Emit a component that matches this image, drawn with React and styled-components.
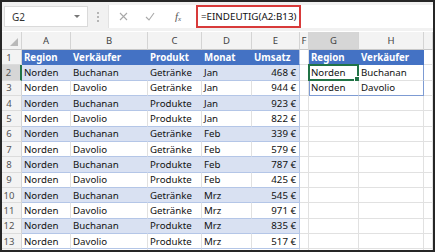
import React from "react";
import styled, { createGlobalStyle, css } from "styled-components";

const Global = createGlobalStyle`
  html, body { margin: 0; padding: 0; background: #fff; }
  body { font-family: "Noto Sans", "Open Sans", sans-serif; }
  * { box-sizing: border-box; }
`;

const COLS = "20px 49px 77px 54px 50px 48px 9px 50px 65px 1fr";
const GRID = "#e1e1e1";
const BLUE = "#4472c4";
const BAND = "#d9e1f2";
const BANDLINE = "#b4c6e7";
const SPILL = "#7d9bd3";

const Frame = styled.div`
  width: 435px;
  height: 252px;
  border: 2px solid #262626;
  background: #fff;
  display: flex;
  flex-direction: column;
  overflow: hidden;
`;

const Toolbar = styled.div`
  height: 29px;
  flex: none;
  background: #f1f1f1;
  display: flex;
  align-items: center;
  padding: 0 0 0 2px;
`;

const NameBox = styled.div`
  width: 84px;
  height: 21px;
  background: #fff;
  border: 1px solid #dadada;
  display: flex;
  align-items: center;
  justify-content: space-between;
  padding: 0 7px 0 7px;
  font-size: 10px;
  color: #333;
`;

const Caret = styled.span`
  width: 0;
  height: 0;
  border-left: 3px solid transparent;
  border-right: 3px solid transparent;
  border-top: 3px solid #777;
`;

const Dots = styled.div`
  width: 20px;
  display: flex;
  flex-direction: column;
  align-items: center;
  gap: 2px;
  span { width: 2px; height: 2px; background: #b5b5b5; }
`;

const FormulaArea = styled.div`
  flex: 1;
  height: 23px;
  background: #fff;
  display: flex;
  align-items: center;
  border-left: 1px solid #e2e2e2;
`;

const FxButton = styled.div`
  width: ${(p) => p.$w}px;
  height: 100%;
  display: flex;
  align-items: center;
  justify-content: center;
  color: #9a9a9a;
`;

const FxText = styled.span`
  font-family: "Liberation Serif", serif;
  font-style: italic;
  font-size: 11px;
  color: #555;
  sub { font-size: 7px; vertical-align: -1px; }
`;

const FormulaInput = styled.div`
  flex: 1;
  height: 100%;
  display: flex;
  align-items: center;
  padding-left: 3px;
`;

const Highlight = styled.div`
  height: 23px;
  border: 2px solid #d83a3a;
  display: flex;
  align-items: center;
  padding: 0 3px 0 3px;
  font-size: 9.8px;
  color: #111;
  white-space: nowrap;
`;

const Sheet = styled.div`
  flex: 1;
  display: flex;
  flex-direction: column;
  overflow: hidden;
  margin-top: 1px;
`;

const Row = styled.div`
  display: grid;
  grid-template-columns: ${COLS};
  height: ${(p) => p.$h}px;
  flex: none;
`;

const HeadCell = styled.div`
  background: ${(p) => (p.$sel ? "#d6d6d6" : "#f3f3f3")};
  border-right: 1px solid #d4d4d4;
  border-bottom: 1px solid #c8c8c8;
  color: #444;
  font-size: 9.5px;
  display: flex;
  align-items: center;
  justify-content: center;
  position: relative;
  overflow: hidden;
`;

const Corner = styled.div`
  background: #f3f3f3;
  border-right: 1px solid #d4d4d4;
  border-bottom: 1px solid #c8c8c8;
  display: flex;
  align-items: flex-end;
  justify-content: flex-end;
  padding: 0 3px 3px 0;
`;

const RowNum = styled.div`
  background: ${(p) => (p.$sel ? "#d6d6d6" : "#f3f3f3")};
  border-right: ${(p) => (p.$sel ? "2px solid #217346" : "1px solid #d4d4d4")};
  border-bottom: 1px solid #dcdcdc;
  color: #555;
  font-size: 9.5px;
  display: flex;
  align-items: center;
  justify-content: center;
  padding-right: 5px;
`;

const Cell = styled.div`
  position: relative;
  font-size: 9.7px;
  color: #111;
  white-space: nowrap;
  overflow: visible;
  display: flex;
  align-items: center;
  justify-content: ${(p) => (p.$right ? "flex-end" : "flex-start")};
  padding: 0 ${(p) => (p.$right ? "3px" : "2px")};
  background: #fff;
  border-right: 1px solid ${GRID};
  border-bottom: 1px solid ${GRID};
  ${(p) =>
    p.$kind === "head" &&
    css`
      background: ${BLUE};
      border-right-color: ${BLUE};
      border-bottom-color: ${BLUE};
      color: #fff;
      font-weight: 700;
    `}
  ${(p) =>
    p.$kind === "band" &&
    css`
      background: ${BAND};
      border-right-color: ${BAND};
      border-bottom-color: ${BANDLINE};
    `}
  ${(p) =>
    p.$kind === "plain" &&
    css`
      border-bottom-color: ${BANDLINE};
    `}
  ${(p) =>
    p.$tableEnd &&
    css`
      border-right: 1px solid ${BANDLINE};
    `}
  ${(p) =>
    p.$spillL &&
    css`
      box-shadow: inset 1px 0 0 ${SPILL};
    `}
  ${(p) =>
    p.$spillR &&
    css`
      border-right: 1px solid ${SPILL};
    `}
  ${(p) =>
    p.$spillB &&
    css`
      border-bottom: 1px solid ${SPILL};
    `}
`;

const Active = styled.div`
  position: absolute;
  left: -1px;
  top: -1px;
  right: -1px;
  bottom: -1px;
  border: 2px solid #217346;
  pointer-events: none;
  &::after {
    content: "";
    position: absolute;
    right: -4px;
    bottom: -4px;
    width: 5px;
    height: 5px;
    background: #217346;
    border: 1px solid #fff;
  }
`;

const data = [
  ["Norden", "Buchanan", "Getränke", "Jan", "468 €"],
  ["Norden", "Davolio", "Getränke", "Jan", "944 €"],
  ["Norden", "Buchanan", "Produkte", "Jan", "923 €"],
  ["Norden", "Davolio", "Produkte", "Jan", "822 €"],
  ["Norden", "Buchanan", "Getränke", "Feb", "339 €"],
  ["Norden", "Davolio", "Getränke", "Feb", "579 €"],
  ["Norden", "Buchanan", "Produkte", "Feb", "787 €"],
  ["Norden", "Davolio", "Produkte", "Feb", "425 €"],
  ["Norden", "Buchanan", "Getränke", "Mrz", "545 €"],
  ["Norden", "Davolio", "Getränke", "Mrz", "971 €"],
  ["Norden", "Buchanan", "Produkte", "Mrz", "835 €"],
  ["Norden", "Davolio", "Produkte", "Mrz", "517 €"],
];

const spill = [
  ["Region", "Verkäufer"],
  ["Norden", "Buchanan"],
  ["Norden", "Davolio"],
];

const letters = ["A", "B", "C", "D", "E", "F", "G", "H", ""];
const RH = 15.33;

function SheetRow({ n }) {
  const isHead = n === 1;
  const rec = n >= 2 && n <= 13 ? data[n - 2] : null;
  const kind = isHead ? "head" : rec ? (n % 2 === 0 ? "band" : "plain") : null;
  const tableVals = isHead
    ? ["Region", "Verkäufer", "Produkt", "Monat", "Umsatz"]
    : rec || ["", "", "", "", ""];
  const sp = n <= 3 ? spill[n - 1] : null;
  return (
    <Row $h={RH}>
      <RowNum $sel={n === 2}>{n <= 13 ? n : ""}</RowNum>
      {tableVals.map((v, i) => (
        <Cell
          key={i}
          $kind={kind}
          $right={i === 4 && !isHead}
          $tableEnd={i === 4 && kind}
        >
          {v}
        </Cell>
      ))}
      <Cell />
      <Cell $kind={n === 1 ? "head" : null} $spillL={n > 1 && n <= 3} $spillB={n === 3}>
        {sp ? sp[0] : ""}
        {n === 2 && <Active />}
      </Cell>
      <Cell $kind={n === 1 ? "head" : null} $spillR={n > 1 && n <= 3} $spillB={n === 3}>
        {sp ? sp[1] : ""}
      </Cell>
      <Cell />
    </Row>
  );
}

export default function App() {
  return (
    <>
      <Global />
      <Frame>
        <Toolbar>
          <NameBox>
            G2
            <Caret />
          </NameBox>
          <Dots>
            <span />
            <span />
            <span />
          </Dots>
          <FormulaArea>
            <FxButton $w={28}>
              <svg width="9" height="9" viewBox="0 0 9 9">
                <path d="M1 1L8 8M8 1L1 8" stroke="#a8a8a8" strokeWidth="1.1" />
              </svg>
            </FxButton>
            <FxButton $w={26}>
              <svg width="10" height="9" viewBox="0 0 10 9">
                <path d="M1 5L4 8L9 1" stroke="#a8a8a8" strokeWidth="1.1" fill="none" />
              </svg>
            </FxButton>
            <FxButton $w={30}>
              <FxText>
                f<sub>x</sub>
              </FxText>
            </FxButton>
            <FormulaInput>
              <Highlight>=EINDEUTIG(A2:B13)</Highlight>
            </FormulaInput>
          </FormulaArea>
        </Toolbar>
        <Sheet>
          <Row $h={18}>
            <Corner>
              <svg width="8" height="8" viewBox="0 0 8 8">
                <path d="M8 0L8 8L0 8Z" fill="#b9b9b9" />
              </svg>
            </Corner>
            {letters.map((l, i) => (
              <HeadCell key={i} $sel={l === "G"}>
                {l}
              </HeadCell>
            ))}
          </Row>
          {Array.from({ length: 14 }, (_, i) => (
            <SheetRow key={i} n={i + 1} />
          ))}
        </Sheet>
      </Frame>
    </>
  );
}
